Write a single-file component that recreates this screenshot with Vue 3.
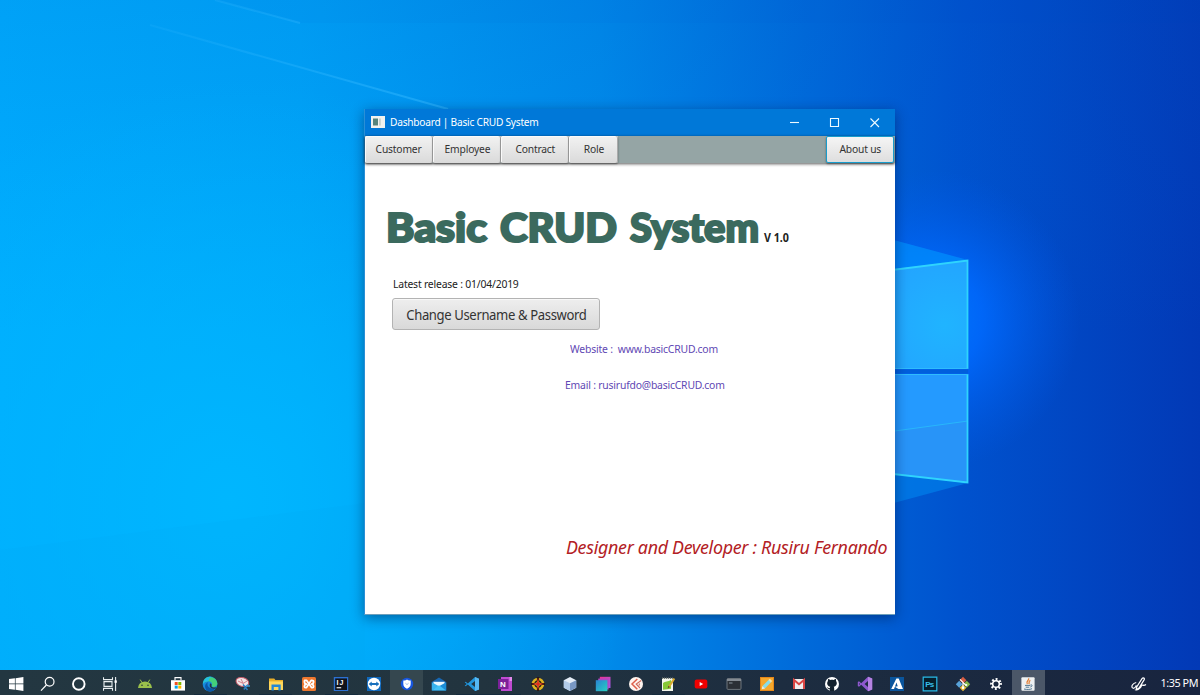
<script setup>
const menu = [
  { label: 'Customer', cls: 'w-customer' },
  { label: 'Employee', cls: 'w-employee' },
  { label: 'Contract', cls: 'w-contract' },
  { label: 'Role', cls: 'w-role' }
]

const system = [
  // start
  '<path fill="#fff" d="M1 3.1 6.9 2.3V7.6H1zM7.6 2.2 15.4 1V7.6H7.6zM1 8.3H6.9V13.7L1 12.9zM7.6 8.3H15.4V15L7.6 13.8z"/>',
  // search
  '<g fill="none" stroke="#fff" stroke-width="1.2"><circle cx="9.6" cy="5.8" r="4.4"/><path d="M6.4 9 1 14.6"/></g>',
  // assistant
  '<circle cx="7.8" cy="8" r="5.8" fill="none" stroke="#fff" stroke-width="1.9"/>',
  // task view
  '<g fill="none" stroke="#e8eef0" stroke-width="1.1"><path d="M.5 1.2V3.6H9.5V1.2M.5 14.8V12.4H9.5V14.8M1 5.6H9V10.4H1zM12.6 1V15"/></g><path fill="#fff" d="M11.5 4.4h2.3v2.4h-2.3z"/>'
]

const apps = [
  { svg: '<path fill="#9bc14b" d="M1 12A7 6.6 0 0 1 15 12z"/><path stroke="#9bc14b" d="M3.2 3.6 5 6.6M12.8 3.6 11 6.6"/><circle cx="5" cy="9.2" r=".8" fill="#24353d"/><circle cx="11" cy="9.2" r=".8" fill="#24353d"/>' },
  { svg: '<path fill="#fff" d="M1 4.2H15V14.6H1z"/><path fill="none" stroke="#fff" stroke-width="1.1" d="M5 4V1.6H11V4"/><path fill="#f25022" d="M4.7 6h3v3h-3z"/><path fill="#7fba00" d="M8.3 6h3v3h-3z"/><path fill="#00a4ef" d="M4.7 9.6h3v3h-3z"/><path fill="#ffb900" d="M8.3 9.6h3v3h-3z"/>' },
  { svg: '<circle cx="8" cy="8" r="7.4" fill="#1687dc"/><path fill="#43d07a" d="M2 4A7.4 7.4 0 0 1 15.4 7.6C15.4 11 11 11.6 9.5 10.3C11 8 9.5 5.4 6.6 5.2 4.6 5.1 2.8 5.8 1 7.4z"/><path fill="#22bfe5" d="M1 7A7.4 7.4 0 0 1 10 1C5.8 1.8 7.8 5 6 5.3 4.2 5.5 2 6.3 1 8z"/><path fill="#0b58a8" d="M6 6C4.2 9.5 6.8 13.4 13.8 12.2A7.4 7.4 0 0 1 5 14.7C1.8 11 3 7.8 6 6z"/><path fill="#24353d" d="M8 7.7C9.5 7.2 10 9 9.3 10.2 10.4 11.7 13 11.7 14.5 10.9L13.5 12.8C10 13.2 6.7 11.5 8 7.7z"/>', run: true },
  { svg: '<ellipse cx="7.4" cy="6" rx="6.5" ry="4.4" fill="#f1e6e8" stroke="#c45a68" transform="rotate(16 7.4 6)"/><path stroke="#ca6472" stroke-width=".8" d="m3 5 5 2.4M6 3l2 4M12 5l-4 2.6"/><path fill="none" stroke="#2b79bd" stroke-width="1.5" d="M8 8.5 12.5 14M12.8 8.6 8.8 13.5"/><path stroke="#41a7e7" stroke-width="1.3" d="M11 10h4"/>' },
  { svg: '<path fill="#e8ad28" d="M1 2.4H6.2L7.4 4H15V14H1z"/><path fill="#ffd75a" d="M1 5.4H15V14H1z"/><path fill="#2387d5" d="M3.5 8.5H12.7V14.4H10.4V11H5.8V14.4H3.5z"/>', run: true },
  { svg: '<rect x="1" y="1" width="14" height="14" rx="1.5" fill="#ed772e"/><g fill="none" stroke="#fff" stroke-width="1.8" stroke-linejoin="round"><path d="M3.6 4.3H5.5L10.5 11.6H11.6Q12.6 11.6 12.6 10.3 12.6 8.6 10.6 8.2 12.6 7.6 12.6 6 12.6 4.3 10.9 4.3H10.3L5.5 11.6H4.4Q3.4 11.6 3.4 10.3 3.4 8.6 5.4 8.2 3.4 7.6 3.4 6z"/></g>' },
  { svg: '<path fill="#2b70d2" d="M.8 1H15.2V15H.8z"/><path fill="#10131a" d="M2.2 2.4H14V14H2.2z"/><text x="3.4" y="8.9" fill="#fff" font-family="Liberation Sans" font-size="7" font-weight="700" textLength="7">IJ</text><path fill="#fff" d="M3.6 11.2h4.6v1.1H3.6z"/>', run: true },
  { svg: '<path fill="#1069bd" d="M1 1H15V15H1z"/><circle cx="8" cy="8" r="6.2" fill="#fff"/><path fill="#1870bd" d="M2.7 8 5.7 5.6V7H10.3V5.6L13.3 8 10.3 10.4V9H5.7V10.4z"/>' },
  { svg: '<circle cx="8" cy="8" r="6.2" fill="#1756dd"/><path fill="#fff" d="M4.3 4.4C6 4.7 7 4.3 8 3.6 9 4.3 10 4.7 11.7 4.4V8C11.7 10.5 9.8 12 8 12.8 6.2 12 4.3 10.5 4.3 8z"/><path fill="none" stroke="#9bbded" d="M6.4 7.2 8 8.6 9.6 7.2"/>', active: true },
  { svg: '<path fill="#1768b4" d="M.8 6 8 1.5 15.2 6V14.5H.8z"/><path fill="#eaf8ff" d="M2.4 5.8H13.6V10H2.4z"/><path fill="#36b2ed" d="M.8 6.2 8 10.2.8 14.5z"/><path fill="#1b8ed8" d="M15.2 6.2 8 10.2 15.2 14.5z"/><path fill="#42c1f5" d="M.8 14.5 8 9.2 15.2 14.5z"/>' },
  { svg: '<path fill="#2196dc" d="M11 1 15 2.7V13.4L11 15 3.8 8.6 1.7 10.3.7 9.7 2.7 8 .7 6.3 1.7 5.7 3.8 7.4zM11 5 7.2 8 11 11z" fill-rule="evenodd"/><path fill="#56b8f2" d="m11 1 4 1.7v10.7L11 15z"/>', run: true },
  { svg: '<path fill="#c04bd2" d="M4 1H15V15H4z"/><path fill="#e389ed" d="M12.5 1H15V5H12.5z"/><path fill="#7c2198" d="M1 3H11.5V13H1z"/><text x="3" y="10.8" fill="#fff" font-family="Liberation Sans" font-size="8" font-weight="700">N</text>', run: true },
  { svg: '<circle cx="8" cy="8" r="5" fill="#3a2813" stroke="#dfb420" stroke-width="2.6"/><path stroke="#261811" stroke-width="2.2" d="M8 1V15M1 8H15"/><path fill="#f4d231" d="M8 4.2 9.4 6.6 11.8 8 9.4 9.4 8 11.8 6.6 9.4 4.2 8 6.6 6.6z"/><path fill="#e02d20" d="M8 1.3 9 7 14.7 8 9 9 8 14.7 7 9 1.3 8 7 7z"/>' },
  { svg: '<path fill="#e4edf7" d="M8 1 14.2 4.2V11.8L8 15 1.8 11.8V4.2z"/><path fill="#b2cce9" d="m1.8 4.2 6.2 3V15L1.8 11.8z"/><path fill="#7898c5" d="m14.2 4.2-6.2 3V15l6.2-3.2z"/>' },
  { svg: '<defs><linearGradient id="layerBack" x1="0" y1="0" x2="1" y2="1"><stop stop-color="#ee3193"/><stop offset="1" stop-color="#9c5bea"/></linearGradient><linearGradient id="layerFront" x1="0" y1="0" x2="1" y2="1"><stop stop-color="#2a83d2"/><stop offset="1" stop-color="#28d0c2"/></linearGradient></defs><path fill="url(#layerBack)" d="M4.8.8H15.5V12H4.8z"/><path fill="#ad48c4" d="M3.2 2.6H13.6V13.5H3.2z"/><path fill="url(#layerFront)" d="M.8 4.2H12.4V15.2H.8z"/>' },
  { svg: '<circle cx="8" cy="8" r="7" fill="#fff4ef"/><path fill="none" stroke="#df604b" stroke-width="1.5" d="M9.3 3 4 8 9.3 13.2"/><path fill="none" stroke="#cf6a5b" stroke-width="1.1" d="M13.2 4.5 8.2 8 12 12M11.3 7.4V9.6"/>' },
  { svg: '<path fill="#f4f6ec" d="M2 2.2H13V15H2z"/><path stroke="#747b75" stroke-width="1.5" stroke-dasharray="1 1" d="M2 2.2H13"/><path fill="#86c837" d="M3 7C5 5 8 6 11 4V12.8L3 13.8z"/><path stroke="#d8aa2f" stroke-width="2.1" d="m14.3 2.5-5.2 8.3"/><path fill="#655025" d="m8.2 9.8 1.8 1.1-2.3 1.7z"/>', run: true },
  { svg: '<rect x="1.7" y="3.4" width="12.6" height="9.2" rx="2" fill="#f00000"/><path fill="#fff" d="m6.7 6 3.5 2-3.5 2z"/>' },
  { svg: '<rect x="1" y="2.7" width="14" height="10.7" rx="1" fill="#2b3036" stroke="#6d757c"/><path fill="#848b92" d="M1 2.7H15V5H1z"/><path stroke="#87929b" d="M3 7H6.5"/>' },
  { svg: '<path fill="#e58719" d="M1 1H15V15H1z"/><path fill="#f6a82c" d="M2 2H14V14H2z"/><path stroke="#87dce7" stroke-width="3.4" d="m4.7 11.3 6.3-6.4"/><path stroke="#f4e4ae" stroke-width="3.4" d="m10.7 5.2 1.3-1.3"/><path fill="#e6ece7" d="M3.3 9.9 6.1 12.6 2.8 13.3z"/>' },
  { svg: '<path fill="#f1eeee" d="M2 3H14V13H2z"/><path fill="none" stroke="#da4644" stroke-width="2" d="M3 13V3.9L8 8.2 13 3.9V13"/>' },
  { svg: '<circle cx="8" cy="8" r="7" fill="#fff"/><path fill="#12202d" d="M4.1 3.1C5 3.1 5.7 3.5 6.2 3.9 7.4 3.6 8.6 3.6 9.8 3.9 10.3 3.5 11 3.1 11.9 3.1 12.2 3.8 12.1 4.6 12 5 13.7 7.1 12.6 10.4 9.7 10.7 10.3 11.3 10.2 12.7 10.2 15H5.8V13.3C3.9 13.7 3.8 11.9 2.7 11.6 4.2 10.9 4.5 12.7 5.9 12.1 6 11.4 6 11 6.3 10.7 3.4 10.4 2.3 7.1 4 5 3.9 4.6 3.8 3.8 4.1 3.1z"/>' },
  { svg: '<path fill="#8e58ce" d="M11 .8 15.2 2.6V13.4L11 15.2 4.2 8.8 2 10.7.8 10V6L2 5.3 4.2 7.2zM11 5 7.6 8 11 11zM2 7V9L3 8z" fill-rule="evenodd"/><path fill="#b583e2" d="m11 .8 4.2 1.8v10.8L11 15.2z"/>', run: true },
  { svg: '<path fill="#0a559d" d="M1 1H15V15H1z"/><path fill="#fff" d="M7.4 2.5H9.7L14 13H9.5L5.8 10.7 8.7 10.2 7.5 6.5 5 13H2.2z"/>' },
  { svg: '<path fill="#061e2b" stroke="#28b9e7" stroke-width="1.2" d="M1.2 1.2H14.8V14.8H1.2z"/><text x="3.3" y="11" fill="#37bee7" font-family="Liberation Sans" font-size="8" font-weight="700" textLength="9">Ps</text>', run: true },
  { svg: '<path fill="#d95e43" d="M8 .8 11.4 4.3 8 7.8 4.6 4.3z"/><path fill="#58a2d9" d="M4.2 4.7 7.6 8.2 4.2 11.7.8 8.2z"/><path fill="#84b84c" d="m11.8 4.7 3.4 3.5-3.4 3.5-3.4-3.5z"/><path fill="#e4b837" d="m8 8.4 3.4 3.4L8 15.2 4.6 11.8z"/><path fill="none" stroke="#fff" stroke-width="1.1" d="m5 3.4 6 6M8 6.3V12"/><circle cx="8" cy="11.8" r="1.3" fill="#fff"/><circle cx="11.2" cy="9" r="1.1" fill="#fff"/>', run: true },
  { svg: '<circle cx="8" cy="8" r="4.5" fill="none" stroke="#fff" stroke-width="2.8" stroke-dasharray="1.7 1.834" transform="rotate(-11 8 8)" /><circle cx="8" cy="8" r="3.3" fill="none" stroke="#fff" stroke-width="1.5"/>' },
  { svg: '<rect x="1.4" y="1.2" width="13.2" height="13.6" rx="1" fill="#eef1f2"/><path fill="none" stroke="#e38139" stroke-width="1.3" d="M8.6 2.2C9.6 4.4 5.4 4.8 7.3 8.2M10.4 4.4C8 5.6 9.8 6.6 8.8 8.2"/><path fill="none" stroke="#527791" stroke-width="1" d="M5 9.4H10.2M10.5 9C13 8.4 12.3 10.8 10.3 11M5.7 11.2H9.3M4 13C7 13.8 11 13.5 12 12.6"/>', wide: true }
]
</script>

<template>
  <div class="desktop">
    <svg class="wallpaper" width="1200" height="670" viewBox="0 0 1200 670">
      <defs>
        <linearGradient id="sky" x1="0" y1="0" x2="1200" y2="0" gradientUnits="userSpaceOnUse">
          <stop offset="0" stop-color="#00adfe" />
          <stop offset=".25" stop-color="#00a5f8" />
          <stop offset=".5" stop-color="#008bea" />
          <stop offset=".65" stop-color="#006edc" />
          <stop offset=".8" stop-color="#0052ce" />
          <stop offset="1" stop-color="#0239b6" />
        </linearGradient>
        <linearGradient id="shade" x1="0" y1="0" x2="0" y2="1">
          <stop offset="0" stop-color="#0058c8" stop-opacity=".14" />
          <stop offset=".5" stop-color="#0070e0" stop-opacity="0" />
        </linearGradient>
        <radialGradient id="cyan" cx="230" cy="500" r="420" gradientUnits="userSpaceOnUse">
          <stop offset="0" stop-color="#00b8ff" stop-opacity=".9" />
          <stop offset="1" stop-color="#00b8ff" stop-opacity="0" />
        </radialGradient>
        <radialGradient id="halo" cx="930" cy="320" r="150" gradientUnits="userSpaceOnUse">
          <stop offset="0" stop-color="#0078ff" />
          <stop offset=".35" stop-color="#006aff" stop-opacity=".85" />
          <stop offset="1" stop-color="#005ae8" stop-opacity="0" />
        </radialGradient>
        <radialGradient id="pane" cx="945" cy="325" r="110" gradientUnits="userSpaceOnUse">
          <stop offset="0" stop-color="#20b4ff" />
          <stop offset="1" stop-color="#249cff" />
        </radialGradient>
        <linearGradient id="beam" x1="150" y1="25" x2="450" y2="109" gradientUnits="userSpaceOnUse">
          <stop offset="0" stop-color="#33b8ff" stop-opacity=".15" />
          <stop offset="1" stop-color="#33b8ff" stop-opacity=".55" />
        </linearGradient>
      </defs>
      <rect width="1200" height="670" fill="url(#sky)" />
      <rect width="1200" height="670" fill="url(#shade)" />
      <rect width="1200" height="670" fill="url(#cyan)" />
      <rect width="1200" height="670" fill="url(#halo)" />
      <path d="M215 0 300 23H1200V0z" fill="#0058c8" opacity=".04" />
      <path d="M215 0 300 23" stroke="url(#beam)" stroke-width="2" />
      <path d="M150 25 448 109" stroke="url(#beam)" stroke-width="2" />
      <path d="M0 550 365 503V670H0z" fill="#00a8f4" opacity=".16" />
      <path d="M890 239 968 260 890 270z" fill="#0098ff" opacity=".6" />
      <path d="M890 472 968 483 890 504z" fill="#0085ee" opacity=".6" />
      <path d="M880 271 968 260V369H880z" fill="url(#pane)" />
      <path d="M880 374H968V483L880 472z" fill="#249aff" />
      <path d="M880 433 968 421V483L880 472z" fill="#2894f8" />
      <path d="M880 433 968 421" stroke="#28b7fb" />
      <path d="M880 271.5 967.5 260.5V369M967.5 374V482.5L880 472.5" fill="none" stroke="#2fd4fd" stroke-width="1.8" />
      <path d="M880 368.5H968M880 374.5H968" stroke="#2fbcfd" />
      <path d="M880 371.5H968" stroke="#005fdc" stroke-width="4" />
    </svg>

    <main class="window">
      <header class="titlebar">
        <svg class="app-icon" width="14" height="12" viewBox="0 0 14 12">
          <path fill="#f2f2ef" d="M0 0h14v12H0z" />
          <path fill="#56847c" d="M2 2.5h5v7H2z" />
          <path fill="#c7d0cc" d="M8 2.5h1.8v7H8z" />
        </svg>
        <span class="caption">Dashboard | Basic CRUD System</span>
        <svg class="controls" width="100" height="20" viewBox="0 0 100 20">
          <g fill="none" stroke="#eefaff" stroke-width="1.1">
            <path d="M5 10.5H14" />
            <path d="M45.5 6.5H53.5V14.5H45.5z" />
            <path d="m85.5 6.5 8.5 8.5m0-8.5-8.5 8.5" />
          </g>
        </svg>
      </header>
      <nav class="menubar">
        <button v-for="m in menu" :key="m.label" :class="['tab', m.cls]"><span class="label">{{ m.label }}</span></button>
        <button class="tab about"><span class="label">About us</span></button>
      </nav>
      <section class="content">
        <svg class="heading" width="420" height="56" viewBox="0 0 420 56">
          <g class="logo">
            <text x="0" y="36.5" textLength="101" lengthAdjust="spacingAndGlyphs">Basic</text>
            <text x="114" y="36.5" textLength="117" lengthAdjust="spacingAndGlyphs">CRUD</text>
            <text x="244" y="36.5" textLength="129" lengthAdjust="spacingAndGlyphs">System</text>
          </g>
          <text class="version" x="378" y="37" textLength="25" lengthAdjust="spacingAndGlyphs">V 1.0</text>
        </svg>
        <p class="release">Latest release : 01/04/2019</p>
        <button class="change"><span class="label">Change Username &amp; Password</span></button>
        <p class="website">Website :&nbsp; www.basicCRUD.com</p>
        <p class="email">Email : rusirufdo@basicCRUD.com</p>
        <p class="credit">Designer and Developer : Rusiru Fernando</p>
      </section>
    </main>

    <footer class="taskbar">
      <div class="system">
        <span v-for="(s, i) in system" :key="i" class="cell"><svg width="16" height="16" viewBox="0 0 16 16" v-html="s"></svg></span>
      </div>
      <div class="apps">
        <span v-for="(a, i) in apps" :key="i" :class="['cell', { active: a.active, wide: a.wide, run: a.run }]"><svg width="16" height="16" viewBox="0 0 16 16" v-html="a.svg"></svg></span>
      </div>
      <svg class="pen" width="16" height="16" viewBox="0 0 16 16">
        <path fill="none" stroke="#fff" stroke-width="1.2" d="M5.2 6.5C1.8 7.2.2 10 1.3 11.7 2.8 13.4 5.2 10.6 5.2 9.2M5 13.8 5.9 10.7 11 2.6C12.2 1.2 14 2.3 13.1 3.9L8 12 5 13.8C7.8 14.4 10 11 10.6 9.5 12.2 8 12 10.6 15 8.5" />
      </svg>
      <span class="clock">1:35 PM</span>
    </footer>
  </div>
</template>

<style>
body { margin: 0; overflow: hidden; }
</style>

<style scoped>
.desktop {
  position: relative;
  display: flex;
  flex-direction: column;
  width: 1200px;
  height: 695px;
  overflow: hidden;
  font-family: "Noto Sans", "Open Sans", sans-serif;
}
.wallpaper { position: absolute; left: 0; top: 0; }
.window {
  position: relative;
  box-sizing: border-box;
  width: 531px;
  height: 506px;
  margin: 109px 0 0 364px;
  display: flex;
  flex-direction: column;
  background: #fff;
  border-left: 1px solid #2a8fd6;
  border-bottom: 1px solid #6d9fbb;
  box-shadow: 0 3px 12px rgba(0, 20, 70, .48);
}
.titlebar {
  display: flex;
  align-items: center;
  height: 27px;
  flex: none;
  box-sizing: border-box;
  padding: 0 0 1px 6px;
  background: #0078d8;
  color: #fff;
}
.caption { margin-left: 5px; font-size: 11px; line-height: 20px; letter-spacing: -.25px; white-space: nowrap; transform: scaleX(.922); transform-origin: left; }
.controls { margin-left: auto; margin-right: 10px; }
.menubar {
  display: flex;
  height: 27px;
  flex: none;
  padding-right: 1px;
  background: #95a5a5;
  box-shadow: 0 1px 3px rgba(0, 0, 0, .65);
}
button { font-family: inherit; color: #333; white-space: nowrap; }
.label { display: inline-block; transform: scaleX(.935); }
.tab {
  box-sizing: border-box;
  height: 27px;
  padding: 0 0 2px;
  border: 0;
  border-radius: 2px;
  background: linear-gradient(#f2f2f2, #dadada);
  box-shadow: inset -1px 0 #aaa, inset 1px 1px #fafafa, 0 1px 2px rgba(0, 0, 0, .45);
  font-size: 11px;
  letter-spacing: -.2px;
}
.w-customer { width: 68px; }
.w-employee { width: 68px; }
.w-contract { width: 68px; }
.w-role { width: 49px; }
.about { width: 68px; height: 27px; padding-bottom: 2px; margin-left: auto; border: 1px solid #189ccc; background: linear-gradient(#f5f5f5, #dedede); box-shadow: 0 1px 2px rgba(0, 0, 0, .45); }
.content { display: flex; flex-direction: column; align-items: flex-start; }
p { margin: 0; white-space: nowrap; transform-origin: left; }
.heading { display: block; margin: 42px 0 0 21px; overflow: visible; }
.logo { font-family: Lato, sans-serif; font-weight: 900; font-size: 40px; fill: #3b6a5e; stroke: #3b6a5e; stroke-width: 2.2px; }
.version { font-family: "Noto Sans", sans-serif; font-weight: 700; font-size: 11.5px; fill: #222; }
.release { margin: 15px 0 0 28px; font-size: 11px; line-height: 16px; letter-spacing: -.2px; color: #222; transform: scaleX(.943); }
.change {
  box-sizing: border-box;
  width: 208px;
  height: 32px;
  margin: 6px 0 0 27px;
  padding: 0;
  border: 1px solid #b3b3b3;
  border-radius: 3px;
  background: linear-gradient(#eeeeee, #d9d9d9);
  box-shadow: inset 0 1px #f8f8f8;
  font-size: 14px;
  letter-spacing: -.4px;
}
.website { margin: 11px 0 0 205px; font-size: 11px; line-height: 16px; letter-spacing: -.2px; color: #5f48b4; transform: scaleX(.945); }
.email { margin: 20px 0 0 200px; font-size: 11px; line-height: 16px; letter-spacing: -.2px; color: #5f48b4; transform: scaleX(.942); }
.credit { margin: 141px 0 0 201px; font-size: 18px; line-height: 26px; font-style: italic; color: #b32024; letter-spacing: -.3px; transform: scaleX(.992); }
.taskbar {
  position: relative;
  display: flex;
  align-items: center;
  height: 25px;
  margin-top: auto;
  background: linear-gradient(90deg, #233741, #22343f 40%, #1d2d40 65%, #18243f);
}
.system { display: flex; width: 128.6px; flex: none; }
.system .cell { width: 31.8px; }
.apps { display: flex; flex: none; }
.apps .cell { width: 32.72px; }
.cell { display: flex; align-items: center; justify-content: center; height: 25px; padding-top: 2px; box-sizing: border-box; }
.active { background: #35474f; }
.wide { background: #4b5768; }
.run { box-shadow: inset 0 -1px #152b3d; }
.pen { margin-left: 86px; margin-top: 2px; }
.clock { margin-left: auto; margin-right: 2px; font-size: 11.5px; letter-spacing: -.45px; color: #fff; white-space: nowrap; transform: scaleX(.94); transform-origin: right; }
</style>
